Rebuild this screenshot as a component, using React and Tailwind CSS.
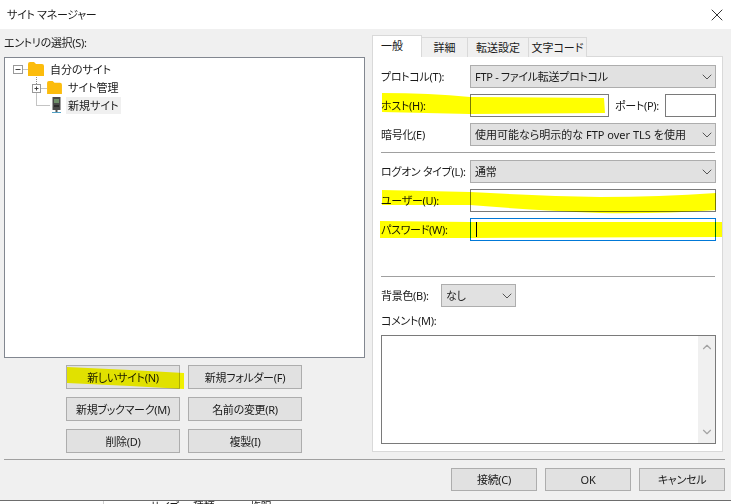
import { ChevronDown, ChevronUp, X } from 'lucide-react';

function Select({ value, className = '' }) {
  return (
    <div className={`h-[23px] flex items-center justify-between bg-[#e1e1e1] border border-[#adadad] pl-[4px] ${className}`}>
      <span>{value}</span>
      <ChevronDown className="w-[16px] h-[16px] text-[#555]" strokeWidth={1.5} />
    </div>
  );
}

function Field({ label, children }) {
  return (
    <div className="flex items-center h-[23px]">
      <span className="w-[89px] shrink-0">{label}</span>
      {children}
    </div>
  );
}

function Btn({ children, className = 'w-[114px] h-[24px]' }) {
  return (
    <button className={`bg-[#e1e1e1] border border-[#adadad] flex items-center justify-center ${className}`}>
      {children}
    </button>
  );
}

function Folder({ className }) {
  return (
    <svg viewBox="0 0 16 14" className={className}>
      <path d="M0 2 Q0 0 2 0 H6 L8 2 H14 Q16 2 16 4 V14 H0 Z" fill="#fcbc0c" />
    </svg>
  );
}

function Tree() {
  return (
    <div className="relative h-[301px] border border-[#828790] bg-white pt-[2px] pl-[9px] tracking-normal">
      <svg className="absolute left-0 top-0 w-[60px] h-[60px]" viewBox="0 0 60 60">
        <g stroke="#888" strokeDasharray="1 1" fill="none">
          <path d="M17.5 11.5H23" />
          <path d="M31.5 19V26.5" />
          <path d="M35.5 30.5H42" />
          <path d="M31.5 34.5V47.5H45" />
        </g>
        <rect x="8.5" y="7.5" width="9" height="8" fill="#fff" stroke="#999" />
        <path d="M10.5 11.5H15.5" stroke="#444" />
        <rect x="27.5" y="26.5" width="8" height="8" fill="#fff" stroke="#999" />
        <path d="M29.5 30.5H33.5M31.5 28.5V32.5" stroke="#444" />
      </svg>
      <div className="h-[18px] flex items-center pl-[14px]">
        <Folder className="w-[16px] h-[14px] mr-[6px]" />
        <span>自分のサイト</span>
      </div>
      <div className="h-[18px] flex items-center pl-[33px]">
        <Folder className="w-[15px] h-[13px] mr-[6px]" />
        <span>サイト管理</span>
      </div>
      <div className="h-[18px] flex items-center pl-[38px]">
        <svg viewBox="0 0 9 16" className="w-[9px] h-[16px] mr-[5px]">
          <rect x="0.5" y="0" width="8" height="13" fill="#4a4a4a" />
          <rect x="2" y="2" width="5" height="4" fill="#6f8f6a" />
          <rect x="2" y="8" width="5" height="2" fill="#2c2c2c" />
          <rect x="3.5" y="13" width="2" height="2" fill="#555" />
          <rect x="0" y="15" width="9" height="1" fill="#4f9fc4" />
        </svg>
        <span className="bg-[#f0f0f0] px-[2px] w-[55px] h-[17px] leading-[17px]">新規サイト</span>
      </div>
    </div>
  );
}

function Tabs() {
  const tabs = [
    { label: '詳細', w: 'w-[46px]' },
    { label: '転送設定', w: 'w-[61px]' },
    { label: '文字コード', w: 'w-[58px]' },
  ];
  return (
    <div className="flex items-end h-[21px] relative z-10 -mb-px tracking-normal">
      <div className="w-[50px] h-[22px] bg-white border border-b-0 border-[#d9d9d9] pl-[8px] leading-[20px]">一般</div>
      {tabs.map((t) => (
        <div key={t.label} className={`${t.w} h-[20px] bg-[#f0f0f0] border border-l-0 border-b-0 border-[#d9d9d9] flex items-center justify-center`}>
          {t.label}
        </div>
      ))}
    </div>
  );
}

function Marker() {
  // 蛍光ペンの線
  return (
    <svg className="absolute left-0 top-0 w-[731px] h-[504px] mix-blend-multiply pointer-events-none" viewBox="0 0 731 504">
      <g fill="#ffff00">
        <path d="M382 93 Q430 93 470 97 L604 98 L605 113 L470 114 L382 112 Z" />
        <path d="M382 190 L470 192 Q540 196 600 197 Q660 197 716 193 L716 210 Q660 214 600 213 Q530 210 470 205 L382 205 Z" />
        <path d="M380 221 L470 222 L722 222 L722 237 L470 238 L380 238 Z" />
        <path d="M67 367 L130 370 L184 373 L184 389 L130 386 L67 383 Z" />
      </g>
    </svg>
  );
}

export default function App() {
  return (
    <div className="relative w-[731px] h-[504px] overflow-hidden bg-white text-[11px] leading-none tracking-[-0.3px] whitespace-nowrap text-[#1a1a1a] [font-feature-settings:'palt'] font-['Noto_Sans','Noto_Sans_CJK_JP',sans-serif]">
      {/* title */}
      <div className="h-[29px] bg-white flex items-center justify-between pl-[7px] pr-[4px]">
        <span>サイト マネージャー</span>
        <X className="w-[20px] h-[20px] text-[#333]" strokeWidth={1.2} />
      </div>

      <div className="h-[472px] bg-[#f0f0f0] border-b border-[#6d6d6d]">
        <div className="flex h-[431px] pt-[7px] border-b border-[#a0a0a0] ml-[4px] mr-[6px]">
          {/* left */}
          <div className="w-[361px] shrink-0">
            <div className="h-[21px] leading-[14px]">エントリの選択(S):</div>
            <Tree />
            <div className="grid grid-cols-[114px_114px] gap-[8px] mt-[7px] ml-[62px]">
              <Btn>新しいサイト(N)</Btn>
              <Btn>新規フォルダー(F)</Btn>
              <Btn>新規ブックマーク(M)</Btn>
              <Btn>名前の変更(R)</Btn>
              <Btn>削除(D)</Btn>
              <Btn>複製(I)</Btn>
            </div>
          </div>

          {/* right */}
          <div className="w-[351px] ml-[7px]">
            <Tabs />
            <div className="h-[396px] bg-white border border-[#d9d9d9] pt-[8px] pl-[8px] pr-[6px]">
              <Field label="プロトコル(T):">
                <Select value="FTP - ファイル転送プロトコル" className="w-[246px]" />
              </Field>
              <div className="mt-[6px]">
                <Field label="ホスト(H):">
                  <div className="w-[139px] h-[23px] bg-white border border-[#7a7a7a]" />
                  <span className="ml-[6px] w-[50px]">ポート(P):</span>
                  <div className="w-[51px] h-[23px] bg-white border border-[#7a7a7a]" />
                </Field>
              </div>
              <div className="mt-[6px]">
                <Field label="暗号化(E)">
                  <Select value="使用可能なら明示的な FTP over TLS を使用" className="w-[246px] tracking-normal" />
                </Field>
              </div>
              <div className="h-px bg-[#a0a0a0] mt-[6px] mb-[7px] w-[334px]" />
              <Field label="ログオン タイプ(L):">
                <Select value="通常" className="w-[246px]" />
              </Field>
              <div className="mt-[6px]">
                <Field label="ユーザー(U):">
                  <div className="w-[246px] h-[23px] bg-white border border-[#7a7a7a]" />
                </Field>
              </div>
              <div className="mt-[6px]">
                <Field label="パスワード(W):">
                  <div className="w-[246px] h-[23px] bg-white border border-[#0078d7] flex items-center pl-[5px]">
                    <div className="w-px h-[15px] bg-black" />
                  </div>
                </Field>
              </div>
              <div className="h-px bg-[#a0a0a0] mt-[35px] mb-[7px] w-[334px]" />
              <div className="flex items-center h-[23px]">
                <span className="w-[60px]">背景色(B):</span>
                <Select value="なし" className="w-[75px]" />
              </div>
              <div className="mt-[8px] h-[20px] leading-[12px]">コメント(M):</div>
              <div className="w-[335px] h-[109px] bg-white border border-[#7a7a7a] flex justify-end">
                <div className="w-[17px] h-full bg-[#f0f0f0] flex flex-col justify-between items-center py-[4px] text-[#a3a3a3]">
                  <ChevronUp className="w-[14px] h-[14px]" strokeWidth={2} />
                  <ChevronDown className="w-[14px] h-[14px]" strokeWidth={2} />
                </div>
              </div>
            </div>
          </div>
        </div>

        {/* footer */}
        <div className="flex justify-end gap-[8px] pt-[8px] pr-[6px]">
          <Btn className="w-[86px] h-[23px]">接続(C)</Btn>
          <Btn className="w-[86px] h-[23px]">OK</Btn>
          <Btn className="w-[86px] h-[23px]">キャンセル</Btn>
        </div>
      </div>

      {/* 後ろのウィンドウのリスト見出し */}
      <div className="h-[3px] overflow-hidden flex">
        <span className="ml-[103px] w-[47px] border-l border-[#d0d0d0]" />
        <span className="w-[43px]">サイズ</span>
        <span className="w-[57px]">種類</span>
        <span>権限</span>
      </div>

      <Marker />
    </div>
  );
}
